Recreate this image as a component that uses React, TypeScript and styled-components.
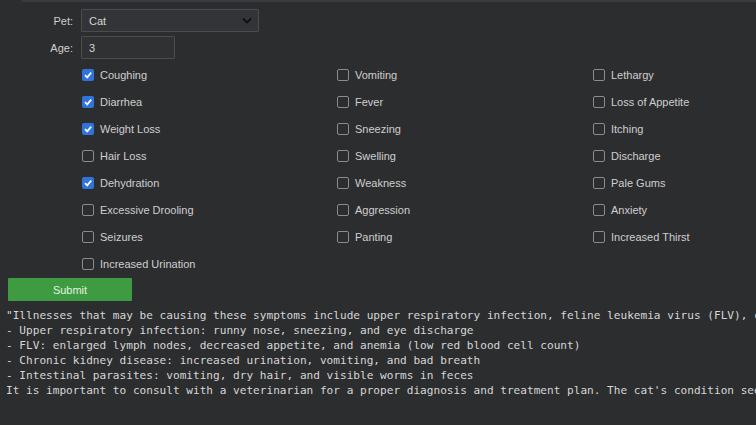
import React, { useState } from "react"
import styled, { createGlobalStyle } from "styled-components"

const GlobalStyle = createGlobalStyle`
  html, body {
    margin: 0;
    padding: 0;
    background: #2c2d2f;
    overflow: hidden;
  }
  body {
    font-family: "Liberation Sans", Arial, sans-serif;
    color: #d2d2d2;
  }
`

const Page = styled.div`
  width: 756px;
  height: 425px;
  overflow: hidden;
  background: #2c2d2f;
`

const TopEdge = styled.div`
  height: 2px;
  margin-left: 22px;
  background: #3a3b3e;
`

const FormGrid = styled.div`
  display: grid;
  grid-template-columns: 73px auto;
  column-gap: 8px;
  row-gap: 4px;
  align-items: center;
  padding-top: 7px;
`

const Label = styled.label`
  text-align: right;
  font-size: 11px;
  color: #cfcfcf;
`

const SelectWrap = styled.div`
  position: relative;
  width: 178px;
  height: 23px;

  svg {
    position: absolute;
    right: 7px;
    top: 8px;
    pointer-events: none;
  }
`

const Select = styled.select`
  appearance: none;
  width: 100%;
  height: 100%;
  box-sizing: border-box;
  background: #323437;
  border: 1px solid #4a4c4f;
  border-radius: 1px;
  color: #d4d4d4;
  font-family: "Liberation Sans", Arial, sans-serif;
  font-size: 11px;
  padding: 0 7px;
  outline: none;
`

const TextInput = styled.input`
  width: 94px;
  height: 23px;
  box-sizing: border-box;
  background: #2f3133;
  border: 1px solid #4a4c4f;
  border-radius: 1px;
  color: #d4d4d4;
  font-family: "Liberation Sans", Arial, sans-serif;
  font-size: 11px;
  padding: 0 7px;
  outline: none;
`

const SymptomGrid = styled.div`
  display: grid;
  grid-template-columns: 255px 256px 1fr;
  grid-auto-rows: 27px;
  padding-left: 82px;
  margin-top: 2px;
`

const Option = styled.label`
  display: flex;
  align-items: center;
  gap: 6px;
  font-size: 11px;
  color: #cfcfcf;
  cursor: pointer;
  white-space: nowrap;
`

const Box = styled.span<{ $checked: boolean }>`
  width: 12px;
  height: 12px;
  box-sizing: border-box;
  border-radius: 2px;
  display: flex;
  align-items: center;
  justify-content: center;
  flex-shrink: 0;
  background: ${(p) => (p.$checked ? "#2f74dd" : "transparent")};
  border: ${(p) => (p.$checked ? "none" : "1px solid #8a8b8d")};
`

const SubmitButton = styled.button`
  display: block;
  margin: 1px 0 0 8px;
  width: 124px;
  height: 23px;
  background: #3f9b42;
  border: none;
  border-radius: 1px;
  color: #e3f3e0;
  font-family: "Liberation Sans", Arial, sans-serif;
  font-size: 11px;
  cursor: pointer;
`

const Output = styled.pre`
  margin: 7px 0 0 6px;
  font-family: "DejaVu Sans Mono", "Liberation Mono", monospace;
  font-size: 11.1px;
  line-height: 15.1px;
  color: #d6d6d6;
  white-space: pre;
`

const symptoms = [
  "Coughing", "Vomiting", "Lethargy",
  "Diarrhea", "Fever", "Loss of Appetite",
  "Weight Loss", "Sneezing", "Itching",
  "Hair Loss", "Swelling", "Discharge",
  "Dehydration", "Weakness", "Pale Gums",
  "Excessive Drooling", "Aggression", "Anxiety",
  "Seizures", "Panting", "Increased Thirst",
  "Increased Urination",
]

const result = `"Illnesses that may be causing these symptoms include upper respiratory infection, feline leukemia virus (FLV), chronic kidney disease, and intestinal parasites.
- Upper respiratory infection: runny nose, sneezing, and eye discharge
- FLV: enlarged lymph nodes, decreased appetite, and anemia (low red blood cell count)
- Chronic kidney disease: increased urination, vomiting, and bad breath
- Intestinal parasites: vomiting, dry hair, and visible worms in feces
It is important to consult with a veterinarian for a proper diagnosis and treatment plan. The cat's condition seems serious."`

const App = () => {
  const [checked, setChecked] = useState<string[]>([
    "Coughing",
    "Diarrhea",
    "Weight Loss",
    "Dehydration",
  ])

  const toggle = (name: string) => {
    setChecked((prev) =>
      prev.includes(name) ? prev.filter((n) => n !== name) : [...prev, name]
    )
  }

  return (
    <Page>
      <GlobalStyle />
      <TopEdge />
      <FormGrid>
        <Label htmlFor="pet">Pet:</Label>
        <SelectWrap>
          <Select id="pet" defaultValue="Cat">
            <option>Cat</option>
            <option>Dog</option>
          </Select>
          <svg width="10" height="7" viewBox="0 0 10 7">
            <path d="M1 1.5 L5 5.5 L9 1.5" fill="none" stroke="#111" strokeWidth="1.8" />
          </svg>
        </SelectWrap>
        <Label htmlFor="age">Age:</Label>
        <TextInput id="age" defaultValue="3" />
      </FormGrid>
      <SymptomGrid>
        {symptoms.map((s) => {
          const on = checked.includes(s)
          return (
            <Option key={s} onClick={() => toggle(s)}>
              <Box $checked={on}>
                {on && (
                  <svg width="10" height="10" viewBox="0 0 10 10">
                    <path d="M2 5.2 L4.2 7.4 L8.2 2.6" fill="none" stroke="#fff" strokeWidth="1.7" />
                  </svg>
                )}
              </Box>
              {s}
            </Option>
          )
        })}
      </SymptomGrid>
      <SubmitButton>Submit</SubmitButton>
      <Output>{result}</Output>
    </Page>
  )
}

export default App
